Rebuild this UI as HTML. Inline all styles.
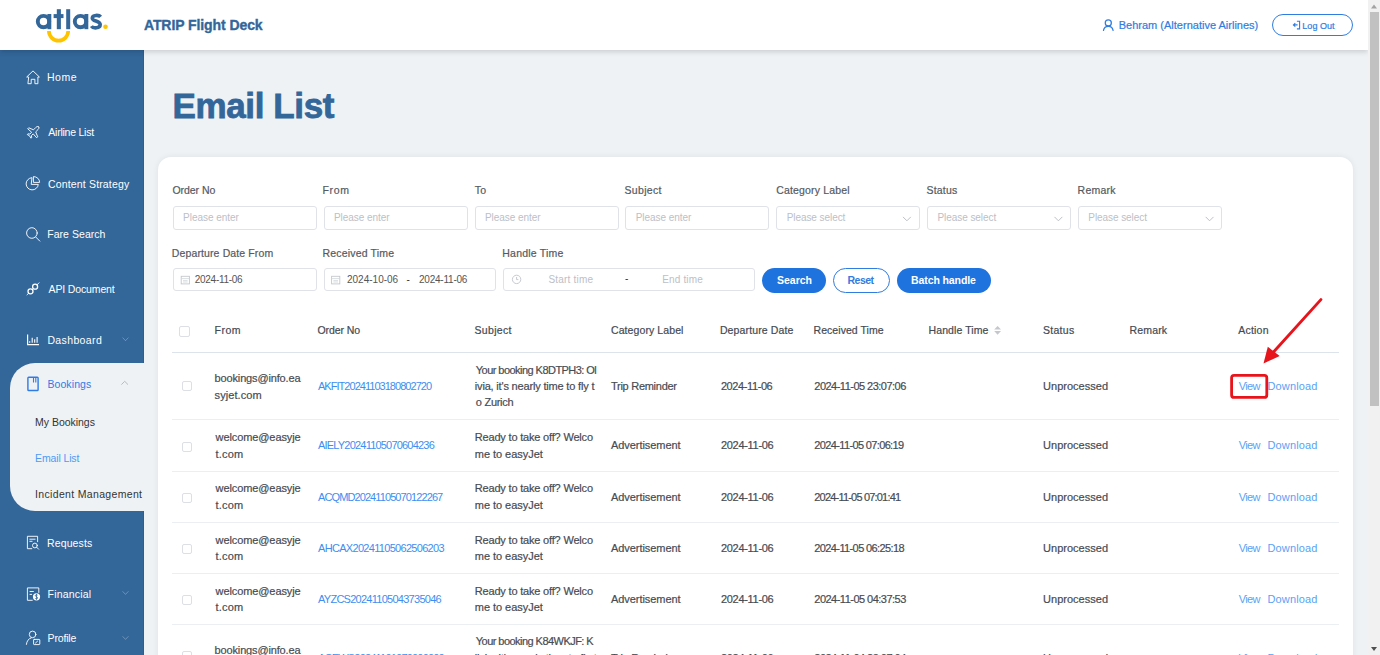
<!DOCTYPE html><html><head><meta charset="utf-8"><title>Email List</title><style>
*{margin:0;padding:0;box-sizing:border-box}
html,body{width:1380px;height:655px;overflow:hidden;background:#eef2f5;font-family:"Liberation Sans", sans-serif;position:relative}
.t{position:absolute;white-space:nowrap;line-height:1}
.a{position:absolute}
.in{position:absolute;background:#fff;border:1px solid #dfe2e8;border-radius:3px}
.cb{position:absolute;width:10px;height:10px;border:1px solid #dcdfe6;border-radius:2px;background:#fff}
</style></head><body>
<div class="a" style="left:0;top:50px;width:143.5px;height:605px;background:#336699;box-shadow:inset -1px 0 0 rgba(0,0,0,0.08)"></div>
<div class="a" style="left:10px;top:363px;width:134px;height:148px;background:#eef2f5;border-radius:25px 0 0 25px"></div>
<div class="a" style="left:0;top:0;width:1368px;height:50px;background:#fff;box-shadow:0 2px 5px rgba(0,0,0,0.15)"></div>
<div class="a" style="left:1272.3px;top:13.6px;width:81px;height:22.6px;border:1.4px solid #2f7de1;border-radius:12px"></div>
<div class="a" style="left:157.8px;top:156.5px;width:1195px;height:560px;background:#fff;border-radius:13px;box-shadow:0 0 6px rgba(0,0,0,0.07)"></div>
<div class="in" style="left:172.7px;top:206px;width:144px;height:23.5px"></div>
<div class="in" style="left:323.5px;top:206px;width:144px;height:23.5px"></div>
<div class="in" style="left:474.5px;top:206px;width:144px;height:23.5px"></div>
<div class="in" style="left:625.3px;top:206px;width:144px;height:23.5px"></div>
<div class="in" style="left:776.4px;top:206px;width:144px;height:23.5px"></div>
<div class="in" style="left:927.2px;top:206px;width:144px;height:23.5px"></div>
<div class="in" style="left:1078.0px;top:206px;width:144px;height:23.5px"></div>
<div class="in" style="left:172.5px;top:268.2px;width:144px;height:23.3px"></div>
<div class="in" style="left:323.6px;top:268.2px;width:172px;height:22.5px"></div>
<div class="in" style="left:503.3px;top:268.2px;width:251.7px;height:22.8px"></div>
<div class="a" style="left:761.6px;top:268px;width:64px;height:24.5px;background:#1f73de;border-radius:13px"></div>
<div class="a" style="left:832.8px;top:268px;width:56.8px;height:24.5px;border:1px solid #2f7de1;border-radius:13px;background:#fff"></div>
<div class="a" style="left:897px;top:268px;width:93.8px;height:24.5px;background:#1f73de;border-radius:13px"></div>
<div class="a" style="left:172.4px;top:351.8px;width:1166.3px;height:1px;background:#dde3ea"></div>
<div class="a" style="left:172.4px;top:419.4px;width:1166.3px;height:1px;background:#ebeef3"></div>
<div class="a" style="left:172.4px;top:470.7px;width:1166.3px;height:1px;background:#ebeef3"></div>
<div class="a" style="left:172.4px;top:521.6px;width:1166.3px;height:1px;background:#ebeef3"></div>
<div class="a" style="left:172.4px;top:572.5px;width:1166.3px;height:1px;background:#ebeef3"></div>
<div class="a" style="left:172.4px;top:623.9px;width:1166.3px;height:1px;background:#ebeef3"></div>
<div class="cb" style="left:179.2px;top:326.2px;width:10.6px;height:10.4px"></div>
<div class="cb" style="left:182.2px;top:380.5px"></div>
<div class="cb" style="left:182.2px;top:441.5px"></div>
<div class="cb" style="left:182.2px;top:492.6px"></div>
<div class="cb" style="left:182.2px;top:543.7px"></div>
<div class="cb" style="left:182.2px;top:594.8px"></div>
<div class="cb" style="left:182.2px;top:650.8px"></div>
<div class="t" style="left:143.90px;top:17.80px;font-size:14px;font-weight:bold;color:#336699;letter-spacing:-0.081px;-webkit-text-stroke:0.35px currentColor;">ATRIP Flight Deck</div>
<div class="t" style="left:1118.70px;top:20.20px;font-size:11px;font-weight:normal;color:#2f7de1;letter-spacing:0.007px;-webkit-text-stroke:0.2px currentColor;">Behram (Alternative Airlines)</div>
<div class="t" style="left:1302.30px;top:21.60px;font-size:9px;font-weight:normal;color:#2f7de1;letter-spacing:0.05px;-webkit-text-stroke:0.2px currentColor;">Log Out</div>
<div class="t" style="left:172.60px;top:88.30px;font-size:35px;font-weight:bold;color:#336699;letter-spacing:-0.389px;-webkit-text-stroke:0.8px currentColor;">Email List</div>
<div class="t" style="left:47.00px;top:72.40px;font-size:10.5px;font-weight:normal;color:#ffffff;letter-spacing:0.533px;">Home</div>
<div class="t" style="left:48.30px;top:126.90px;font-size:10.5px;font-weight:normal;color:#ffffff;letter-spacing:-0.236px;">Airline List</div>
<div class="t" style="left:48.00px;top:178.50px;font-size:10.5px;font-weight:normal;color:#ffffff;letter-spacing:0.16px;">Content Strategy</div>
<div class="t" style="left:47.20px;top:228.80px;font-size:10.5px;font-weight:normal;color:#ffffff;letter-spacing:0.05px;">Fare Search</div>
<div class="t" style="left:48.60px;top:283.80px;font-size:10.5px;font-weight:normal;color:#ffffff;letter-spacing:-0.145px;">API Document</div>
<div class="t" style="left:47.40px;top:334.70px;font-size:10.5px;font-weight:normal;color:#ffffff;letter-spacing:0.375px;">Dashboard</div>
<div class="t" style="left:47.40px;top:378.70px;font-size:10.5px;font-weight:normal;color:#2f7be6;letter-spacing:0.1px;">Bookings</div>
<div class="t" style="left:35.10px;top:416.70px;font-size:10.5px;font-weight:normal;color:#333333;letter-spacing:-0.03px;">My Bookings</div>
<div class="t" style="left:35.10px;top:452.80px;font-size:10.5px;font-weight:normal;color:#4d9af5;letter-spacing:-0.133px;">Email List</div>
<div class="t" style="left:35.10px;top:488.70px;font-size:10.5px;font-weight:normal;color:#333333;letter-spacing:0.328px;">Incident Management</div>
<div class="t" style="left:47.00px;top:537.80px;font-size:10.5px;font-weight:normal;color:#ffffff;letter-spacing:0.129px;">Requests</div>
<div class="t" style="left:47.60px;top:588.70px;font-size:10.5px;font-weight:normal;color:#ffffff;letter-spacing:0.175px;">Financial</div>
<div class="t" style="left:47.60px;top:632.60px;font-size:10.5px;font-weight:normal;color:#ffffff;letter-spacing:-0.167px;">Profile</div>
<div class="t" style="left:172.40px;top:185.00px;font-size:10.5px;font-weight:normal;color:#555a61;letter-spacing:-0.029px;-webkit-text-stroke:0.2px currentColor;">Order No</div>
<div class="t" style="left:322.40px;top:185.00px;font-size:10.5px;font-weight:normal;color:#555a61;letter-spacing:0.7px;-webkit-text-stroke:0.2px currentColor;">From</div>
<div class="t" style="left:474.70px;top:185.00px;font-size:10.5px;font-weight:normal;color:#555a61;letter-spacing:0.2px;-webkit-text-stroke:0.2px currentColor;">To</div>
<div class="t" style="left:624.50px;top:185.00px;font-size:10.5px;font-weight:normal;color:#555a61;letter-spacing:0.317px;-webkit-text-stroke:0.2px currentColor;">Subject</div>
<div class="t" style="left:776.20px;top:185.00px;font-size:10.5px;font-weight:normal;color:#555a61;letter-spacing:0.162px;-webkit-text-stroke:0.2px currentColor;">Category Label</div>
<div class="t" style="left:926.50px;top:185.00px;font-size:10.5px;font-weight:normal;color:#555a61;letter-spacing:0.18px;-webkit-text-stroke:0.2px currentColor;">Status</div>
<div class="t" style="left:1077.60px;top:185.00px;font-size:10.5px;font-weight:normal;color:#555a61;letter-spacing:0.22px;-webkit-text-stroke:0.2px currentColor;">Remark</div>
<div class="t" style="left:171.80px;top:247.80px;font-size:10.5px;font-weight:normal;color:#555a61;letter-spacing:0.122px;-webkit-text-stroke:0.2px currentColor;">Departure Date From</div>
<div class="t" style="left:322.40px;top:247.80px;font-size:10.5px;font-weight:normal;color:#555a61;letter-spacing:0.192px;-webkit-text-stroke:0.2px currentColor;">Received Time</div>
<div class="t" style="left:502.30px;top:247.80px;font-size:10.5px;font-weight:normal;color:#555a61;letter-spacing:0.21px;-webkit-text-stroke:0.2px currentColor;">Handle Time</div>
<div class="t" style="left:183.10px;top:212.80px;font-size:10px;font-weight:normal;color:#bcc0c7;letter-spacing:-0.045px;">Please enter</div>
<div class="t" style="left:333.90px;top:212.80px;font-size:10px;font-weight:normal;color:#bcc0c7;letter-spacing:-0.045px;">Please enter</div>
<div class="t" style="left:484.90px;top:212.80px;font-size:10px;font-weight:normal;color:#bcc0c7;letter-spacing:-0.045px;">Please enter</div>
<div class="t" style="left:635.70px;top:212.80px;font-size:10px;font-weight:normal;color:#bcc0c7;letter-spacing:-0.045px;">Please enter</div>
<div class="t" style="left:786.70px;top:212.80px;font-size:10px;font-weight:normal;color:#bcc0c7;letter-spacing:-0.067px;">Please select</div>
<div class="t" style="left:937.50px;top:212.80px;font-size:10px;font-weight:normal;color:#bcc0c7;letter-spacing:-0.067px;">Please select</div>
<div class="t" style="left:1088.30px;top:212.80px;font-size:10px;font-weight:normal;color:#bcc0c7;letter-spacing:-0.067px;">Please select</div>
<div class="t" style="left:194.80px;top:275.10px;font-size:10px;font-weight:normal;color:#555;letter-spacing:-0.289px;">2024-11-06</div>
<div class="t" style="left:347.00px;top:275.10px;font-size:10px;font-weight:normal;color:#555;letter-spacing:0.0px;">2024-10-06</div>
<div class="t" style="left:406.50px;top:274.50px;font-size:10px;font-weight:normal;color:#333;letter-spacing:0px;">-</div>
<div class="t" style="left:419.00px;top:275.10px;font-size:10px;font-weight:normal;color:#555;letter-spacing:-0.222px;">2024-11-06</div>
<div class="t" style="left:548.40px;top:275.40px;font-size:10px;font-weight:normal;color:#bcc0c7;letter-spacing:0.222px;">Start time</div>
<div class="t" style="left:625.00px;top:274.00px;font-size:10px;font-weight:normal;color:#333;letter-spacing:0px;">-</div>
<div class="t" style="left:662.20px;top:275.40px;font-size:10px;font-weight:normal;color:#bcc0c7;letter-spacing:0.157px;">End time</div>
<div class="t" style="left:777.00px;top:275.30px;font-size:10.5px;font-weight:bold;color:#fff;letter-spacing:0.0px;">Search</div>
<div class="t" style="left:847.50px;top:275.30px;font-size:10.5px;font-weight:bold;color:#2f7de1;letter-spacing:-0.5px;">Reset</div>
<div class="t" style="left:911.00px;top:275.30px;font-size:10.5px;font-weight:bold;color:#fff;letter-spacing:-0.091px;">Batch handle</div>
<div class="t" style="left:214.60px;top:325.20px;font-size:10.5px;font-weight:normal;color:#444a52;letter-spacing:0.467px;-webkit-text-stroke:0.2px currentColor;">From</div>
<div class="t" style="left:317.40px;top:325.20px;font-size:10.5px;font-weight:normal;color:#444a52;letter-spacing:-0.057px;-webkit-text-stroke:0.2px currentColor;">Order No</div>
<div class="t" style="left:474.50px;top:325.20px;font-size:10.5px;font-weight:normal;color:#444a52;letter-spacing:0.333px;-webkit-text-stroke:0.2px currentColor;">Subject</div>
<div class="t" style="left:611.00px;top:325.20px;font-size:10.5px;font-weight:normal;color:#444a52;letter-spacing:0.092px;-webkit-text-stroke:0.2px currentColor;">Category Label</div>
<div class="t" style="left:719.90px;top:325.20px;font-size:10.5px;font-weight:normal;color:#444a52;letter-spacing:0.131px;-webkit-text-stroke:0.2px currentColor;">Departure Date</div>
<div class="t" style="left:813.50px;top:325.20px;font-size:10.5px;font-weight:normal;color:#444a52;letter-spacing:0.058px;-webkit-text-stroke:0.2px currentColor;">Received Time</div>
<div class="t" style="left:928.60px;top:325.20px;font-size:10.5px;font-weight:normal;color:#444a52;letter-spacing:0.08px;-webkit-text-stroke:0.2px currentColor;">Handle Time</div>
<div class="t" style="left:1042.90px;top:325.20px;font-size:10.5px;font-weight:normal;color:#444a52;letter-spacing:0.3px;-webkit-text-stroke:0.2px currentColor;">Status</div>
<div class="t" style="left:1129.50px;top:325.20px;font-size:10.5px;font-weight:normal;color:#444a52;letter-spacing:0.16px;-webkit-text-stroke:0.2px currentColor;">Remark</div>
<div class="t" style="left:1238.30px;top:325.20px;font-size:10.5px;font-weight:normal;color:#444a52;letter-spacing:0.2px;-webkit-text-stroke:0.2px currentColor;">Action</div>
<div class="t" style="left:214.60px;top:373.00px;font-size:11px;font-weight:normal;color:#474b52;letter-spacing:-0.153px;-webkit-text-stroke:0.2px currentColor;">bookings@info.ea</div>
<div class="t" style="left:214.60px;top:389.50px;font-size:11px;font-weight:normal;color:#474b52;letter-spacing:0.075px;-webkit-text-stroke:0.2px currentColor;">syjet.com</div>
<div class="t" style="left:318.00px;top:380.90px;font-size:11px;font-weight:normal;color:#3d8ef0;letter-spacing:-0.967px;">AKFIT20241103180802720</div>
<div class="t" style="left:475.80px;top:364.50px;font-size:11px;font-weight:normal;color:#474b52;letter-spacing:-0.543px;-webkit-text-stroke:0.2px currentColor;">Your booking K8DTPH3: Ol</div>
<div class="t" style="left:474.80px;top:380.90px;font-size:11px;font-weight:normal;color:#474b52;letter-spacing:-0.177px;-webkit-text-stroke:0.2px currentColor;">ivia, it's nearly time to fly t</div>
<div class="t" style="left:475.80px;top:397.40px;font-size:11px;font-weight:normal;color:#474b52;letter-spacing:-0.271px;-webkit-text-stroke:0.2px currentColor;">o Zurich</div>
<div class="t" style="left:611.00px;top:380.90px;font-size:11px;font-weight:normal;color:#474b52;letter-spacing:-0.275px;-webkit-text-stroke:0.2px currentColor;">Trip Reminder</div>
<div class="t" style="left:720.90px;top:380.90px;font-size:11px;font-weight:normal;color:#474b52;letter-spacing:-0.4px;-webkit-text-stroke:0.2px currentColor;">2024-11-06</div>
<div class="t" style="left:814.30px;top:380.90px;font-size:11px;font-weight:normal;color:#474b52;letter-spacing:-0.517px;-webkit-text-stroke:0.2px currentColor;">2024-11-05 23:07:06</div>
<div class="t" style="left:1043.10px;top:380.90px;font-size:11px;font-weight:normal;color:#474b52;letter-spacing:0.01px;-webkit-text-stroke:0.2px currentColor;">Unprocessed</div>
<div class="t" style="left:1238.70px;top:380.90px;font-size:11px;font-weight:normal;color:#5aa2f5;letter-spacing:-0.6px;">View</div>
<div class="t" style="left:1267.50px;top:380.90px;font-size:11px;font-weight:normal;color:#5aa2f5;letter-spacing:0.143px;">Download</div>
<div class="t" style="left:215.60px;top:432.20px;font-size:11px;font-weight:normal;color:#474b52;letter-spacing:-0.1px;-webkit-text-stroke:0.2px currentColor;">welcome@easyje</div>
<div class="t" style="left:215.60px;top:448.70px;font-size:11px;font-weight:normal;color:#474b52;letter-spacing:0.2px;-webkit-text-stroke:0.2px currentColor;">t.com</div>
<div class="t" style="left:318.00px;top:440.40px;font-size:11px;font-weight:normal;color:#3d8ef0;letter-spacing:-0.8px;">AIELY20241105070604236</div>
<div class="t" style="left:474.80px;top:432.20px;font-size:11px;font-weight:normal;color:#474b52;letter-spacing:-0.187px;-webkit-text-stroke:0.2px currentColor;">Ready to take off? Welco</div>
<div class="t" style="left:474.80px;top:448.70px;font-size:11px;font-weight:normal;color:#474b52;letter-spacing:-0.042px;-webkit-text-stroke:0.2px currentColor;">me to easyJet</div>
<div class="t" style="left:611.00px;top:440.40px;font-size:11px;font-weight:normal;color:#474b52;letter-spacing:-0.058px;-webkit-text-stroke:0.2px currentColor;">Advertisement</div>
<div class="t" style="left:720.90px;top:440.40px;font-size:11px;font-weight:normal;color:#474b52;letter-spacing:-0.289px;-webkit-text-stroke:0.2px currentColor;">2024-11-06</div>
<div class="t" style="left:814.30px;top:440.40px;font-size:11px;font-weight:normal;color:#474b52;letter-spacing:-0.639px;-webkit-text-stroke:0.2px currentColor;">2024-11-05 07:06:19</div>
<div class="t" style="left:1043.10px;top:440.40px;font-size:11px;font-weight:normal;color:#474b52;letter-spacing:0.01px;-webkit-text-stroke:0.2px currentColor;">Unprocessed</div>
<div class="t" style="left:1238.70px;top:440.40px;font-size:11px;font-weight:normal;color:#5aa2f5;letter-spacing:-0.6px;">View</div>
<div class="t" style="left:1267.50px;top:440.40px;font-size:11px;font-weight:normal;color:#5aa2f5;letter-spacing:0.143px;">Download</div>
<div class="t" style="left:215.60px;top:483.40px;font-size:11px;font-weight:normal;color:#474b52;letter-spacing:-0.1px;-webkit-text-stroke:0.2px currentColor;">welcome@easyje</div>
<div class="t" style="left:215.60px;top:499.90px;font-size:11px;font-weight:normal;color:#474b52;letter-spacing:0.2px;-webkit-text-stroke:0.2px currentColor;">t.com</div>
<div class="t" style="left:318.00px;top:491.60px;font-size:11px;font-weight:normal;color:#3d8ef0;letter-spacing:-0.9px;">ACQMD20241105070122267</div>
<div class="t" style="left:474.80px;top:483.40px;font-size:11px;font-weight:normal;color:#474b52;letter-spacing:-0.187px;-webkit-text-stroke:0.2px currentColor;">Ready to take off? Welco</div>
<div class="t" style="left:474.80px;top:499.90px;font-size:11px;font-weight:normal;color:#474b52;letter-spacing:-0.042px;-webkit-text-stroke:0.2px currentColor;">me to easyJet</div>
<div class="t" style="left:611.00px;top:491.60px;font-size:11px;font-weight:normal;color:#474b52;letter-spacing:-0.058px;-webkit-text-stroke:0.2px currentColor;">Advertisement</div>
<div class="t" style="left:720.90px;top:491.60px;font-size:11px;font-weight:normal;color:#474b52;letter-spacing:-0.289px;-webkit-text-stroke:0.2px currentColor;">2024-11-06</div>
<div class="t" style="left:814.30px;top:491.60px;font-size:11px;font-weight:normal;color:#474b52;letter-spacing:-0.806px;-webkit-text-stroke:0.2px currentColor;">2024-11-05 07:01:41</div>
<div class="t" style="left:1043.10px;top:491.60px;font-size:11px;font-weight:normal;color:#474b52;letter-spacing:0.01px;-webkit-text-stroke:0.2px currentColor;">Unprocessed</div>
<div class="t" style="left:1238.70px;top:491.60px;font-size:11px;font-weight:normal;color:#5aa2f5;letter-spacing:-0.6px;">View</div>
<div class="t" style="left:1267.50px;top:491.60px;font-size:11px;font-weight:normal;color:#5aa2f5;letter-spacing:0.143px;">Download</div>
<div class="t" style="left:215.60px;top:534.50px;font-size:11px;font-weight:normal;color:#474b52;letter-spacing:-0.1px;-webkit-text-stroke:0.2px currentColor;">welcome@easyje</div>
<div class="t" style="left:215.60px;top:551.00px;font-size:11px;font-weight:normal;color:#474b52;letter-spacing:0.2px;-webkit-text-stroke:0.2px currentColor;">t.com</div>
<div class="t" style="left:318.00px;top:542.70px;font-size:11px;font-weight:normal;color:#3d8ef0;letter-spacing:-0.69px;">AHCAX20241105062506203</div>
<div class="t" style="left:474.80px;top:534.50px;font-size:11px;font-weight:normal;color:#474b52;letter-spacing:-0.187px;-webkit-text-stroke:0.2px currentColor;">Ready to take off? Welco</div>
<div class="t" style="left:474.80px;top:551.00px;font-size:11px;font-weight:normal;color:#474b52;letter-spacing:-0.042px;-webkit-text-stroke:0.2px currentColor;">me to easyJet</div>
<div class="t" style="left:611.00px;top:542.70px;font-size:11px;font-weight:normal;color:#474b52;letter-spacing:-0.058px;-webkit-text-stroke:0.2px currentColor;">Advertisement</div>
<div class="t" style="left:720.90px;top:542.70px;font-size:11px;font-weight:normal;color:#474b52;letter-spacing:-0.289px;-webkit-text-stroke:0.2px currentColor;">2024-11-06</div>
<div class="t" style="left:814.30px;top:542.70px;font-size:11px;font-weight:normal;color:#474b52;letter-spacing:-0.611px;-webkit-text-stroke:0.2px currentColor;">2024-11-05 06:25:18</div>
<div class="t" style="left:1043.10px;top:542.70px;font-size:11px;font-weight:normal;color:#474b52;letter-spacing:0.01px;-webkit-text-stroke:0.2px currentColor;">Unprocessed</div>
<div class="t" style="left:1238.70px;top:542.70px;font-size:11px;font-weight:normal;color:#5aa2f5;letter-spacing:-0.6px;">View</div>
<div class="t" style="left:1267.50px;top:542.70px;font-size:11px;font-weight:normal;color:#5aa2f5;letter-spacing:0.143px;">Download</div>
<div class="t" style="left:215.60px;top:585.60px;font-size:11px;font-weight:normal;color:#474b52;letter-spacing:-0.1px;-webkit-text-stroke:0.2px currentColor;">welcome@easyje</div>
<div class="t" style="left:215.60px;top:602.10px;font-size:11px;font-weight:normal;color:#474b52;letter-spacing:0.2px;-webkit-text-stroke:0.2px currentColor;">t.com</div>
<div class="t" style="left:318.00px;top:593.80px;font-size:11px;font-weight:normal;color:#3d8ef0;letter-spacing:-0.733px;">AYZCS20241105043735046</div>
<div class="t" style="left:474.80px;top:585.60px;font-size:11px;font-weight:normal;color:#474b52;letter-spacing:-0.187px;-webkit-text-stroke:0.2px currentColor;">Ready to take off? Welco</div>
<div class="t" style="left:474.80px;top:602.10px;font-size:11px;font-weight:normal;color:#474b52;letter-spacing:-0.042px;-webkit-text-stroke:0.2px currentColor;">me to easyJet</div>
<div class="t" style="left:611.00px;top:593.80px;font-size:11px;font-weight:normal;color:#474b52;letter-spacing:-0.058px;-webkit-text-stroke:0.2px currentColor;">Advertisement</div>
<div class="t" style="left:720.90px;top:593.80px;font-size:11px;font-weight:normal;color:#474b52;letter-spacing:-0.289px;-webkit-text-stroke:0.2px currentColor;">2024-11-06</div>
<div class="t" style="left:814.30px;top:593.80px;font-size:11px;font-weight:normal;color:#474b52;letter-spacing:-0.517px;-webkit-text-stroke:0.2px currentColor;">2024-11-05 04:37:53</div>
<div class="t" style="left:1043.10px;top:593.80px;font-size:11px;font-weight:normal;color:#474b52;letter-spacing:0.01px;-webkit-text-stroke:0.2px currentColor;">Unprocessed</div>
<div class="t" style="left:1238.70px;top:593.80px;font-size:11px;font-weight:normal;color:#5aa2f5;letter-spacing:-0.6px;">View</div>
<div class="t" style="left:1267.50px;top:593.80px;font-size:11px;font-weight:normal;color:#5aa2f5;letter-spacing:0.143px;">Download</div>
<div class="t" style="left:214.60px;top:644.70px;font-size:11px;font-weight:normal;color:#474b52;letter-spacing:-0.153px;-webkit-text-stroke:0.2px currentColor;">bookings@info.ea</div>
<div class="t" style="left:214.60px;top:661.20px;font-size:11px;font-weight:normal;color:#474b52;letter-spacing:0.075px;-webkit-text-stroke:0.2px currentColor;">syjet.com</div>
<div class="t" style="left:318.00px;top:653.00px;font-size:11px;font-weight:normal;color:#3d8ef0;letter-spacing:-0.8px;">ACEWS20241101070000000</div>
<div class="t" style="left:475.80px;top:636.40px;font-size:11px;font-weight:normal;color:#474b52;letter-spacing:-0.543px;-webkit-text-stroke:0.2px currentColor;">Your booking K84WKJF: K</div>
<div class="t" style="left:474.80px;top:653.00px;font-size:11px;font-weight:normal;color:#474b52;letter-spacing:-0.177px;-webkit-text-stroke:0.2px currentColor;">livia, it's nearly time to fly t</div>
<div class="t" style="left:611.00px;top:653.00px;font-size:11px;font-weight:normal;color:#474b52;letter-spacing:-0.275px;-webkit-text-stroke:0.2px currentColor;">Trip Reminder</div>
<div class="t" style="left:720.90px;top:653.00px;font-size:11px;font-weight:normal;color:#474b52;letter-spacing:-0.289px;-webkit-text-stroke:0.2px currentColor;">2024-11-06</div>
<div class="t" style="left:814.30px;top:653.00px;font-size:11px;font-weight:normal;color:#474b52;letter-spacing:-0.517px;-webkit-text-stroke:0.2px currentColor;">2024-11-04 23:07:04</div>
<div class="t" style="left:1043.10px;top:653.00px;font-size:11px;font-weight:normal;color:#474b52;letter-spacing:0.01px;-webkit-text-stroke:0.2px currentColor;">Unprocessed</div>
<div class="t" style="left:1238.70px;top:653.00px;font-size:11px;font-weight:normal;color:#5aa2f5;letter-spacing:-0.6px;">View</div>
<div class="t" style="left:1267.50px;top:653.00px;font-size:11px;font-weight:normal;color:#5aa2f5;letter-spacing:0.143px;">Download</div>
<div class="a" style="left:1368px;top:0;width:12px;height:655px;background:#f1f1f1"></div>
<div class="a" style="left:1369.5px;top:12px;width:9px;height:394px;background:#c1c1c1"></div>
<svg class="a" style="left:0;top:0" width="1380" height="655" viewBox="0 0 1380 655"><circle cx="43.5" cy="21.6" r="5.7" fill="none" stroke="#336699" stroke-width="3.9"/><rect x="47.4" y="14" width="3.9" height="15.2" fill="#336699"/><rect x="56.8" y="9.2" width="4.1" height="20" fill="#336699"/><rect x="53.6" y="14.1" width="9.9" height="4" fill="#336699"/><rect x="66.2" y="9.2" width="4" height="20" fill="#336699"/><circle cx="80.5" cy="21.6" r="5.7" fill="none" stroke="#336699" stroke-width="3.9"/><rect x="84.4" y="14" width="3.9" height="15.2" fill="#336699"/><path d="M100.6 16.9 C99.2 14.9 92.3 14.6 92.3 18.2 C92.3 21.6 100.2 20.4 100.2 24.6 C100.2 28.7 93 28.6 91.4 26.1" fill="none" stroke="#336699" stroke-width="3.6"/><circle cx="105.5" cy="26.7" r="2.3" fill="#ffc400"/><path d="M48.9 31 A9.65 9.65 0 0 0 68.2 31" fill="none" stroke="#ffc400" stroke-width="3.7"/><circle cx="1108.3" cy="22.9" r="3.05" fill="none" stroke="#2f7de1" stroke-width="1.25"/><path d="M1103.5 30.3 A4.9 4.9 0 0 1 1113.1 30.3" fill="none" stroke="#2f7de1" stroke-width="1.25" stroke-linecap="round"/><path d="M1296.9 21.3 H1299.6 V28.9 H1296.9" fill="none" stroke="#2f7de1" stroke-width="1.1"/><path d="M1297.6 24.9 H1293.6 M1295.3 23.2 L1293.4 24.9 L1295.3 26.6" fill="none" stroke="#2f7de1" stroke-width="1.1"/><path d="M28.3 77 H26.7 L33 70.9 L39.4 77 H37.9 V83.7 H34.9 V79.3 H31.2 V83.7 H28.3 Z" fill="none" stroke="#ffffff" stroke-width="1.0" stroke-linejoin="round" stroke-linecap="round" stroke-opacity="0.92"/><path d="M38.6 126.9 C39.4 127.7 38.9 128.7 38 129.6 L35.7 131.9 L37.7 136.8 L36.7 137.8 L33.2 133.9 L31.4 135.6 L31.7 137.5 L30.9 138.2 L29.6 135.9 L27.3 134.6 L27.9 133.8 L29.9 134.1 L31.6 132.2 L27.7 128.8 L28.7 127.8 L33.5 129.8 L35.9 127.4 C36.8 126.5 37.8 126.1 38.6 126.9 Z" fill="none" stroke="#ffffff" stroke-width="1.0" stroke-linejoin="round" stroke-linecap="round" stroke-opacity="0.92"/><path d="M31.6 177.7 A6.1 6.1 0 1 0 38.3 184.4 H31.6 Z" fill="none" stroke="#ffffff" stroke-width="1.0" stroke-linejoin="round" stroke-linecap="round" stroke-opacity="0.92"/><path d="M33.8 176.6 A5.7 5.7 0 0 1 39.6 182.4 H33.8 Z" fill="none" stroke="#ffffff" stroke-width="1.0" stroke-linejoin="round" stroke-linecap="round" stroke-opacity="0.92"/><circle cx="31.9" cy="233.0" r="5.3" fill="none" stroke="#ffffff" stroke-width="1.0" stroke-linejoin="round" stroke-linecap="round" stroke-opacity="0.92"/><path d="M35.8 237.1 L39.8 241.1" fill="none" stroke="#ffffff" stroke-width="1.0" stroke-linejoin="round" stroke-linecap="round" stroke-opacity="0.92"/><circle cx="35.1" cy="286.7" r="2.5" fill="none" stroke="#ffffff" stroke-width="1.3"/><circle cx="30.5" cy="291.3" r="2.5" fill="none" stroke="#ffffff" stroke-width="1.3"/><path d="M37 284.8 L39 282.8 M28.6 293.2 L27 294.8" fill="none" stroke="#ffffff" stroke-width="1.0" stroke-linejoin="round" stroke-linecap="round" stroke-opacity="0.92"/><path d="M27.6 334.4 V344.7 H39" fill="none" stroke="#ffffff" stroke-width="1.2"/><path d="M29.7 341.2 V342.8 M32.2 337.8 V342.8 M34.7 339.2 V342.8 M37.1 336.9 V342.8" fill="none" stroke="#ffffff" stroke-width="1.1"/><rect x="27.9" y="377.3" width="10.2" height="13.2" rx="0.8" fill="none" stroke="#2f7be6" stroke-width="1.4"/><path d="M33.5 377.5 V382.6 M35.8 377.5 V382.6" fill="none" stroke="#2f7be6" stroke-width="1.1"/><path d="M37.6 541.7 V536.3 H27.4 V548.7 H31.8 M29.8 539.2 H35.1 M29.8 541.3 H32.1" fill="none" stroke="#ffffff" stroke-width="1.0" stroke-linejoin="round" stroke-linecap="round" stroke-opacity="0.92"/><circle cx="34.9" cy="545.5" r="2.4" fill="none" stroke="#ffffff" stroke-width="1.0" stroke-linejoin="round" stroke-linecap="round" stroke-opacity="0.92"/><path d="M36.7 547.3 L38.6 549.2" fill="none" stroke="#ffffff" stroke-width="1.0" stroke-linejoin="round" stroke-linecap="round" stroke-opacity="0.92"/><path d="M38.8 592.5 V587.9 H27.4 V600.3 H32.3 M30 591.5 H33.4 M30 594.4 H31.6" fill="none" stroke="#ffffff" stroke-width="1.0" stroke-linejoin="round" stroke-linecap="round" stroke-opacity="0.92"/><circle cx="36.5" cy="596.8" r="3.6" fill="#ffffff"/><path d="M37.6 595.2 C37.1 594.4 35.3 594.5 35.3 595.6 C35.3 596.8 37.7 596.6 37.7 597.9 C37.7 599 35.8 599.1 35.2 598.3 M36.5 593.8 V599.8" fill="none" stroke="#336699" stroke-width="0.8"/><circle cx="32.6" cy="634.4" r="3.3" fill="none" stroke="#ffffff" stroke-width="1.0" stroke-linejoin="round" stroke-linecap="round" stroke-opacity="0.92"/><path d="M31.2 637.9 C28.5 638.6 26.8 641 26.4 644.4" fill="none" stroke="#ffffff" stroke-width="1.0" stroke-linejoin="round" stroke-linecap="round" stroke-opacity="0.92"/><rect x="33.6" y="639.4" width="6.2" height="5.2" rx="0.6" fill="none" stroke="#ffffff" stroke-width="1.0" stroke-linejoin="round" stroke-linecap="round" stroke-opacity="0.92"/><path d="M35.2 643.3 L37.9 640.8" fill="none" stroke="#ffffff" stroke-width="0.9"/><path d="M122.6 337.6 L125.5 340.7 L128.4 337.6" fill="none" stroke="rgba(255,255,255,0.28)" stroke-width="1"/><path d="M121.4 384.6 L124.7 381.3 L128 384.6" fill="none" stroke="#b8bcc2" stroke-width="1"/><path d="M122.6 591.3 L125.5 594.4 L128.4 591.3" fill="none" stroke="rgba(255,255,255,0.28)" stroke-width="1"/><path d="M122.6 636.3 L125.5 639.4 L128.4 636.3" fill="none" stroke="rgba(255,255,255,0.28)" stroke-width="1"/><path d="M903.0 216.9 L906.9 220.8 L910.8 216.9" fill="none" stroke="#b5b9c0" stroke-width="0.9"/><path d="M1054.5 216.9 L1058.4 220.8 L1062.3000000000002 216.9" fill="none" stroke="#b5b9c0" stroke-width="0.9"/><path d="M1205.6999999999998 216.9 L1209.6 220.8 L1213.5 216.9" fill="none" stroke="#b5b9c0" stroke-width="0.9"/><rect x="181.2" y="276.3" width="8.2" height="7.6" fill="none" stroke="#c4c7cd" stroke-width="0.9"/><path d="M181.2 278.6 H189.39999999999998 M183.0 280.6 H187.6 M183.0 282 H187.6" fill="none" stroke="#d2d5da" stroke-width="0.8"/><rect x="331.6" y="276.3" width="8.2" height="7.6" fill="none" stroke="#c4c7cd" stroke-width="0.9"/><path d="M331.6 278.6 H339.8 M333.40000000000003 280.6 H338.0 M333.40000000000003 282 H338.0" fill="none" stroke="#d2d5da" stroke-width="0.8"/><circle cx="516.6" cy="279.4" r="4.2" fill="none" stroke="#c0c4cc" stroke-width="0.9"/><path d="M516.6 277 V279.6 H518.4" fill="none" stroke="#c0c4cc" stroke-width="0.9"/><path d="M994.2 329.5 L997.6 326 L1001 329.5 Z M994.2 331.1 L997.6 334.8 L1001 331.1 Z" fill="#c4c7cd"/><path d="M1320.9 299.6 L1271.5 354.2" fill="none" stroke="#e8141c" stroke-width="2.9" stroke-linecap="round"/><path d="M1263.5 363.4 L1267.8 346.8 L1279.7 355.9 Z" fill="#e8141c"/><rect x="1231.6" y="375.3" width="35.2" height="22.1" rx="2.5" fill="none" stroke="#e8141c" stroke-width="2.8"/><path d="M1371 8.5 L1374 4.5 L1377 8.5 Z" fill="#a3a3a3"/><path d="M1371 647 L1374 651 L1377 647 Z" fill="#505050"/></svg>
</body></html>
